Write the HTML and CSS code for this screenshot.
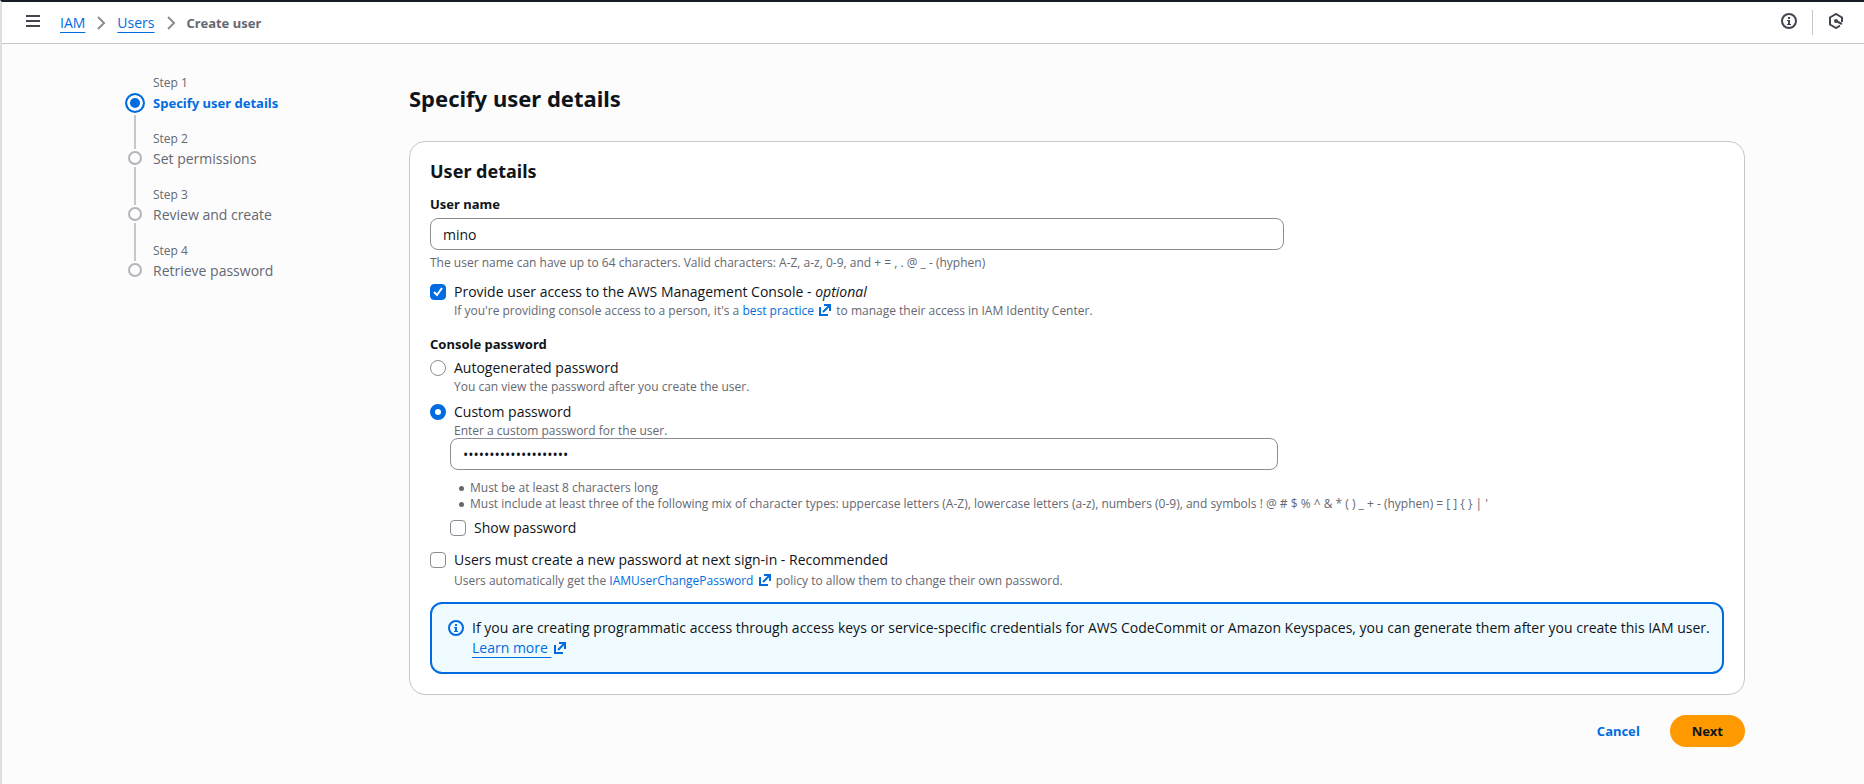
FILE: index.html
```
<!DOCTYPE html>
<html lang="en">
<head>
	<title>Create user | IAM</title>
	<meta charset="utf-8">
	<link rel="stylesheet" href="styles.css">
</head>
<body>
	<header class="topbar">
		<button class="icon-button" aria-label="Open navigation">
			<svg width="16" height="16" viewBox="0 0 16 16"><path d="M1 3h14M1 8h14M1 13h14"/></svg>
		</button>
		<nav aria-label="Breadcrumbs">
			<ol class="breadcrumbs">
				<li><a href="#">IAM</a></li>
				<li>
					<svg class="chevron" width="16" height="16" viewBox="0 0 16 16"><path d="M5 2l6 6-6 6"/></svg>
					<a href="#">Users</a>
				</li>
				<li>
					<svg class="chevron" width="16" height="16" viewBox="0 0 16 16"><path d="M5 2l6 6-6 6"/></svg>
					<span class="current">Create user</span>
				</li>
			</ol>
		</nav>
		<div class="tools">
			<button class="icon-button" aria-label="Info">
				<svg width="16" height="16" viewBox="0 0 16 16"><circle cx="8" cy="8" r="7"/><path class="solid" d="M7 4h2v2H7zM6 7h3v4h1v1H6v-1h1V8H6z"/></svg>
			</button>
			<span class="divider"></span>
			<button class="icon-button" aria-label="Assistant">
				<svg width="16" height="16" viewBox="0 0 16 16"><path d="M14 9V4.500L8 1 2 4.500v7L8 15l4-2.300"/><circle class="solid" cx="8" cy="8" r="2"/><path d="M8 8l6 3"/></svg>
			</button>
		</div>
	</header>

	<div class="wizard">
		<nav class="steps-nav" aria-label="Steps">
			<ol class="steps">
				<li class="step active">
					<div class="marker"><span class="dot"></span><span class="line"></span></div>
					<div class="step-text"><span class="step-number">Step 1</span><span class="step-title">Specify user details</span></div>
				</li>
				<li class="step">
					<div class="marker"><span class="line top"></span><span class="dot"></span><span class="line"></span></div>
					<div class="step-text"><span class="step-number">Step 2</span><span class="step-title">Set permissions</span></div>
				</li>
				<li class="step">
					<div class="marker"><span class="line top"></span><span class="dot"></span><span class="line"></span></div>
					<div class="step-text"><span class="step-number">Step 3</span><span class="step-title">Review and create</span></div>
				</li>
				<li class="step">
					<div class="marker"><span class="line top"></span><span class="dot"></span></div>
					<div class="step-text"><span class="step-number">Step 4</span><span class="step-title">Retrieve password</span></div>
				</li>
			</ol>
		</nav>

		<main class="content">
			<h1>Specify user details</h1>
			<form>
				<section class="card">
					<h2>User details</h2>

					<div class="field">
						<label class="field-label" for="username">User name</label>
						<input class="text-input" type="text" id="username" value="mino">
						<p class="hint">The user name can have up to 64 characters. Valid characters: A-Z, a-z, 0-9, and + = , . @ _ - (hyphen)</p>
					</div>

					<div class="option">
						<input type="checkbox" id="console-access" checked>
						<div>
							<label for="console-access">Provide user access to the AWS Management Console - <em>optional</em></label>
							<p class="hint">If you're providing console access to a person, it's a <a href="#">best practice <svg class="external" width="16" height="16" viewBox="0 0 16 16"><path d="M7 3h6v6M13 3l-7 7M3 5v8h8"/></svg></a> to manage their access in IAM Identity Center.</p>
						</div>
					</div>

					<fieldset class="password">
						<legend class="field-label">Console password</legend>
						<div class="option">
							<input type="radio" name="password-type" id="auto-password">
							<div>
								<label for="auto-password">Autogenerated password</label>
								<p class="hint">You can view the password after you create the user.</p>
							</div>
						</div>
						<div class="option">
							<input type="radio" name="password-type" id="custom-password" checked>
							<div>
								<label for="custom-password">Custom password</label>
								<p class="hint">Enter a custom password for the user.</p>
							</div>
						</div>
						<div class="custom">
							<input class="text-input" type="password" aria-label="Custom password" value="aaaaaaaaaaaaaaaaaaaa">
							<ul class="rules">
								<li>Must be at least 8 characters long</li>
								<li>Must include at least three of the following mix of character types: uppercase letters (A-Z), lowercase letters (a-z), numbers (0-9), and symbols ! @ # $ % ^ &amp; * ( ) _ + - (hyphen) = [ ] { } | '</li>
							</ul>
							<div class="option">
								<input type="checkbox" id="show-password">
								<label for="show-password">Show password</label>
							</div>
						</div>
					</fieldset>

					<div class="option reset">
						<input type="checkbox" id="reset-password">
						<div>
							<label for="reset-password">Users must create a new password at next sign-in - Recommended</label>
							<p class="hint">Users automatically get the <a href="#">IAMUserChangePassword <svg class="external" width="16" height="16" viewBox="0 0 16 16"><path d="M7 3h6v6M13 3l-7 7M3 5v8h8"/></svg></a> policy to allow them to change their own password.</p>
						</div>
					</div>

					<div class="alert">
						<svg class="alert-icon" width="16" height="16" viewBox="0 0 16 16"><circle cx="8" cy="8" r="7"/><path class="solid" d="M7 4h2v2H7zM6 7h3v4h1v1H6v-1h1V8H6z"/></svg>
						<p>If you are creating programmatic access through access keys or service-specific credentials for AWS CodeCommit or Amazon Keyspaces, you can generate them after you create this IAM user. <a class="learn-more" href="#"><span>Learn more&nbsp;</span><svg class="external" width="16" height="16" viewBox="0 0 16 16"><path d="M7 3h6v6M13 3l-7 7M3 5v8h8"/></svg></a></p>
					</div>
				</section>

				<div class="actions">
					<button type="button" class="button">Cancel</button>
					<button type="button" class="button primary">Next</button>
				</div>
			</form>
		</main>
	</div>
</body>
</html>
```
FILE: styles.css
```
* {
	box-sizing: border-box;
}
body {
	margin: 0;
	min-height: 100vh;
	border-top: 2px solid #161d26;
	border-left: 2px solid #dedee3;
	background: #fcfcfd;
	color: #0f141a;
	font: 14px/20px "Open Sans", "Noto Sans", sans-serif;
}
h1, h2, p, ol, ul, fieldset {
	margin: 0;
	padding: 0;
}
ol, ul {
	list-style: none;
}
a {
	color: #006ce0;
	text-decoration: none;
}
svg {
	fill: none;
	stroke: currentColor;
	stroke-width: 2;
}
.solid {
	fill: currentColor;
	stroke: none;
}
button, input {
	font: inherit;
	color: inherit;
}
h1, h2, .current, .active .step-title, .field-label, .button {
	font-family: "Noto Sans", sans-serif;
	font-weight: bold;
}
.current, .active .step-title, .field-label, .button {
	font-size: 13px;
}

/* top bar */
.topbar {
	display: flex;
	align-items: center;
	height: 42px;
	padding: 0 20px 0 23px;
	background: #fff;
	border-bottom: 1px solid #c6c6cd;
}
.icon-button {
	display: flex;
	padding: 0 0 4px;
	border: 0;
	background: none;
	color: #424650;
}
.breadcrumbs {
	display: flex;
	margin-left: 19px;
}
.breadcrumbs li {
	display: flex;
	align-items: center;
}
.breadcrumbs a, .learn-more span {
	text-decoration: underline;
	text-decoration-thickness: 1px;
	text-underline-offset: 4px;
}
.learn-more {
	white-space: nowrap;
}
.chevron {
	margin: 0 8px;
	color: #8c8c94;
}
.current {
	color: #656871;
}
.tools {
	display: flex;
	align-items: center;
	gap: 15px;
	margin-left: auto;
}
.divider {
	width: 1px;
	height: 25px;
	background: #c6c6cd;
}

/* wizard */
.wizard {
	display: flex;
	max-width: 1624px;
	margin: 0 auto;
	padding-top: 31px;
}
.steps-nav {
	flex: 0 0 288px;
}
.step {
	display: flex;
	gap: 4px;
	height: 56px;
	color: #656871;
}
.marker {
	display: flex;
	flex-direction: column;
	align-items: center;
	gap: 2px;
	width: 28px;
}
.line {
	flex: 1;
	width: 2px;
	background: #c6c6cd;
}
.line.top {
	flex: 0 0 18px;
}
.dot {
	width: 14px;
	height: 14px;
	border: 2px solid #b4b4bb;
	border-radius: 50%;
}
.active .dot {
	width: 20px;
	height: 20px;
	margin-top: 18px;
	border-color: #006ce0;
	background: #006ce0;
	box-shadow: inset 0 0 0 3px #fcfcfd;
}
.step-text {
	display: flex;
	flex-direction: column;
}
.step-number {
	font-size: 12px;
	line-height: 16px;
}
.step-title {
	padding-top: 2px;
}
.active .step-title {
	color: #006ce0;
}

.content {
	flex: 1;
	min-width: 0;
}
h1 {
	padding: 8px 0 28px;
	font-size: 22px;
	line-height: 30px;
}
.card {
	padding: 17px 20px 20px;
	border: 1px solid #c6c6cd;
	border-radius: 16px;
	background: #fff;
}
h2 {
	font-size: 18px;
	line-height: 24px;
}

/* form fields */
.field {
	margin: 11px 0 10px;
}
.field-label {
	display: block;
	padding: 0;
}
.text-input {
	display: block;
	width: 66%;
	height: 32px;
	margin: 4px 0;
	padding: 0 12px;
	border: 1px solid #8c8c94;
	border-radius: 8px;
	background: #fff;
}
.hint, .rules {
	color: #656871;
	font-size: 12px;
	line-height: 18px;
}
.option {
	display: flex;
	gap: 8px;
}
input[type="checkbox"], input[type="radio"] {
	appearance: none;
	flex: none;
	width: 16px;
	height: 16px;
	margin: 2px 0 0;
	border: 1px solid #8c8c94;
	border-radius: 4px;
	background: #fff;
}
input[type="radio"] {
	border-radius: 50%;
}
input[type="checkbox"]:checked {
	border-color: #006ce0;
	background: #006ce0 url("data:image/svg+xml,%3Csvg xmlns='http://www.w3.org/2000/svg' viewBox='0 0 14 14'%3E%3Cpath d='M3 7l3 3 5-7' fill='none' stroke='white' stroke-width='2'/%3E%3C/svg%3E");
}
input[type="radio"]:checked {
	border: 5px solid #006ce0;
}
.external {
	vertical-align: -3px;
}
.password {
	margin-top: 14px;
	border: 0;
}
.password > .option {
	margin-top: 4px;
	margin-bottom: 6px;
}
.custom {
	margin: -8px 0 0 20px;
}
.custom .text-input {
	width: 65%;
	margin: 0;
}
.rules {
	margin: 10px 0 6px;
	padding-left: 9px;
	line-height: 16px;
}
.rules li {
	display: flex;
	align-items: center;
	gap: 6px;
}
.rules li::before {
	content: "";
	flex: none;
	width: 5px;
	height: 5px;
	border-radius: 50%;
	background: #656871;
}
.reset {
	margin: 12px 0;
}
.reset .hint {
	padding-top: 2px;
}

.alert {
	display: flex;
	gap: 8px;
	padding: 14px 8px 14px 16px;
	border: 2px solid #006ce0;
	border-radius: 12px;
	background: #f0fbff;
}
.alert-icon {
	flex: none;
	margin-top: 2px;
	color: #006ce0;
}

/* footer buttons */
.actions {
	display: flex;
	justify-content: flex-end;
	gap: 8px;
	padding: 20px 0;
}
.button {
	height: 32px;
	padding: 0 22px;
	border: 0;
	border-radius: 16px;
	background: none;
	color: #006ce0;
}
.button.primary {
	background: #ff9900;
	color: #0f141a;
}
```
